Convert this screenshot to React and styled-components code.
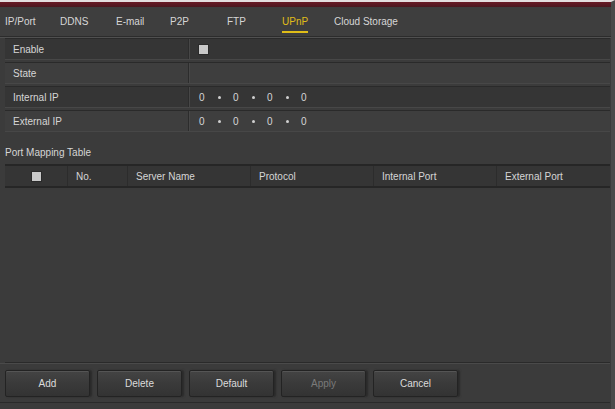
import React from "react";
import styled, { createGlobalStyle } from "styled-components";

const GlobalStyle = createGlobalStyle`
  html, body {
    margin: 0;
    padding: 0;
    background: #3a3a3a;
  }
  * { box-sizing: border-box; }
`;

const Page = styled.div`
  width: 615px;
  height: 409px;
  display: flex;
  flex-direction: column;
  background: #3b3b3b;
  font-family: "Liberation Sans", Arial, sans-serif;
  font-size: 10px;
  color: #d6d6d6;
  border-top: 2px solid #e4dfe0;
  border-right: 4px solid #4a4a4a;
  overflow: hidden;
`;

const TopStripe = styled.div`
  height: 5px;
  background: linear-gradient(#6a1a26, #4a1820);
`;

const TabBar = styled.nav`
  height: 30px;
  display: flex;
  align-items: center;
  padding-left: 5px;
  background: #3e3e3e;
  border-bottom: 1px solid #2c2c2c;
  box-shadow: 0 1px 0 #505050;
`;

const Tab = styled.div`
  width: ${(p) => p.w || "auto"};
  height: 30px;
  display: flex;
  align-items: center;
  flex-shrink: 0;
  span {
    position: relative;
    color: ${(p) => (p.active ? "#e0bd18" : "#d6d6d6")};
  }
  span::after {
    content: "";
    display: ${(p) => (p.active ? "block" : "none")};
    position: absolute;
    left: 0;
    right: 0;
    bottom: -6px;
    height: 2px;
    background: #e0bd18;
  }
`;

const Form = styled.div`
  margin: 1px 1px 0 5px;
  display: flex;
  flex-direction: column;
  gap: 2px;
`;

const Row = styled.div`
  height: 22px;
  display: flex;
  background: ${(p) => (p.alt ? "#3e3e3e" : "#353535")};
  border-top: 1px solid #2a2a2a;
  border-bottom: 1px solid #474747;
`;

const Label = styled.div`
  width: 184px;
  display: flex;
  align-items: center;
  padding-left: 8px;
  border-right: 1px solid #2c2c2c;
`;

const Value = styled.div`
  flex: 1;
  display: flex;
  align-items: center;
  padding-left: 9px;
  border-left: 1px solid #474747;
`;

const CheckBox = styled.div`
  width: 9px;
  height: 9px;
  background: #c9c9c9;
  box-shadow: 0 0 0 1px #2a2a2a;
`;

const IpSeg = styled.span`
  display: inline-flex;
  align-items: center;
  width: 34px;
  gap: 13px;
  i {
    width: 3px;
    height: 3px;
    background: #d0d0d0;
    border-radius: 50%;
  }
`;

const SectionTitle = styled.div`
  margin: 14px 0 0 5px;
  height: 14px;
  line-height: 14px;
`;

const Table = styled.div`
  margin: 4px 1px 0 5px;
  flex: 1;
  display: flex;
  flex-direction: column;
  border-bottom: 1px solid #2a2a2a;
`;

const Head = styled.div`
  height: 24px;
  display: grid;
  grid-template-columns: 62px 60px 123px 123px 123px 1fr;
  background: #353535;
  border-top: 2px solid #262626;
  border-bottom: 2px solid #262626;
`;

const HeadCell = styled.div`
  display: flex;
  align-items: center;
  justify-content: ${(p) => (p.center ? "center" : "flex-start")};
  padding-left: ${(p) => (p.center ? "0" : "8px")};
  border-left: ${(p) => (p.first ? "none" : "1px solid #2c2c2c")};
`;

const Body = styled.div`
  flex: 1;
  background: #3b3b3b;
`;

const ButtonBar = styled.div`
  height: 40px;
  display: flex;
  align-items: center;
  gap: 7px;
  padding: 0 5px;
  margin: 0 1px 6px 0;
  border-top: 1px solid #4a4a4a;
  border-bottom: 1px solid #2a2a2a;
`;

const Button = styled.button`
  width: 85px;
  height: 27px;
  border: 1px solid #232323;
  border-radius: 2px;
  background: linear-gradient(#444 0%, #3a3a3a 50%, #333 100%);
  box-shadow: inset 0 1px 0 #555, 2px 0 2px #2a2a2a;
  color: ${(p) => (p.disabled ? "#7a7a7a" : "#dcdcdc")};
  font-family: "Liberation Sans", Arial, sans-serif;
  font-size: 10px;
  padding: 0;
`;

const Ip = () => (
  <>
    <IpSeg>0<i /></IpSeg>
    <IpSeg>0<i /></IpSeg>
    <IpSeg>0<i /></IpSeg>
    <IpSeg>0</IpSeg>
  </>
);

const tabs = [
  ["IP/Port", "55px"],
  ["DDNS", "56px"],
  ["E-mail", "54px"],
  ["P2P", "57px"],
  ["FTP", "55px"],
  ["UPnP", "52px"],
  ["Cloud Storage", "auto"],
];

export default function App() {
  return (
    <>
      <GlobalStyle />
      <Page>
        <TopStripe />
        <TabBar>
          {tabs.map(([t, w]) => (
            <Tab key={t} w={w} active={t === "UPnP"}>
              <span>{t}</span>
            </Tab>
          ))}
        </TabBar>
        <Form>
          <Row>
            <Label>Enable</Label>
            <Value><CheckBox /></Value>
          </Row>
          <Row alt>
            <Label>State</Label>
            <Value />
          </Row>
          <Row>
            <Label>Internal IP</Label>
            <Value><Ip /></Value>
          </Row>
          <Row alt>
            <Label>External IP</Label>
            <Value><Ip /></Value>
          </Row>
        </Form>
        <SectionTitle>Port Mapping Table</SectionTitle>
        <Table>
          <Head>
            <HeadCell first center><CheckBox /></HeadCell>
            <HeadCell>No.</HeadCell>
            <HeadCell>Server Name</HeadCell>
            <HeadCell>Protocol</HeadCell>
            <HeadCell>Internal Port</HeadCell>
            <HeadCell>External Port</HeadCell>
          </Head>
          <Body />
        </Table>
        <ButtonBar>
          <Button>Add</Button>
          <Button>Delete</Button>
          <Button>Default</Button>
          <Button disabled>Apply</Button>
          <Button>Cancel</Button>
        </ButtonBar>
      </Page>
    </>
  );
}
